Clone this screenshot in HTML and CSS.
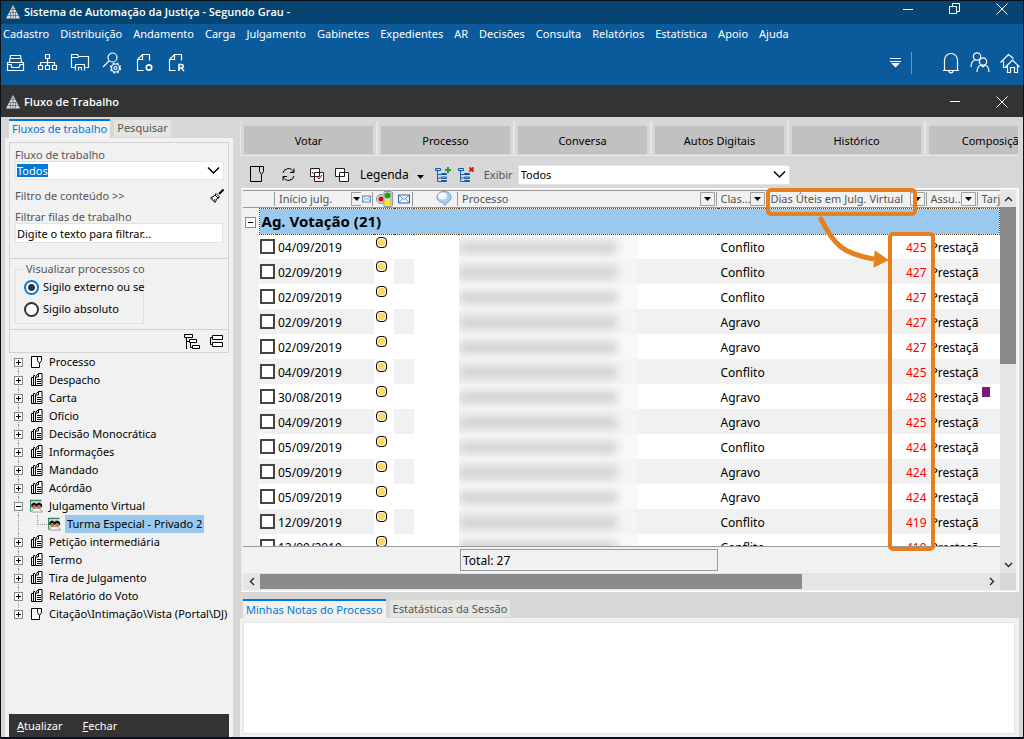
FILE: index.html
```html
<!DOCTYPE html>
<html lang="pt-BR">
<head>
<meta charset="utf-8">
<title>Sistema de Automação da Justiça - Segundo Grau</title>
<link rel="stylesheet" href="styles.css">
</head>
<body>
<svg class="defs" aria-hidden="true">
  <symbol id="logo" viewBox="0 0 14 14"><path d="M7 0L14 13.500H0z" fill="#d9dcdf"/><path d="M5 4.500h4M3.500 7.500h7M2 10.500h10M7 2v11M4.500 7v6M9.500 7v6" stroke="#56606a" stroke-width=".7" fill="none"/></symbol>
  <symbol id="docs" viewBox="0 0 13 14"><path d="M3 4.500H1.500v8H4M5 2.500H3.500v10H5.500" fill="none" stroke="#000"/><path d="M5.500 3.500l3-3h3.500v12H5.500z" fill="#fff" stroke="#000"/><path d="M5.500 4h3V.5M7 6.500h4M7 8.500h4M7 10.500h4" fill="none" stroke="#000"/></symbol>
  <symbol id="folder" viewBox="0 0 13 14"><path d="M1.500 1.500h10v4l-2 3v4h-8z" fill="#f8f8f8" stroke="#000"/><path d="M7.500 1.500v4l2 3" fill="none" stroke="#000"/></symbol>
  <symbol id="people" viewBox="0 0 14 14"><path d="M.5 13V1h12" fill="none" stroke="#2e8b57" stroke-width="1.500"/><path d="M1.500 2h11v6h-11z" fill="#d0d0d0"/><path d="M1.500 13.500l2.500-4h6l3.500 4z" fill="#f4f4f4" stroke="#777" stroke-width=".7"/><circle cx="4.500" cy="7.500" r="2.500" fill="#c9714a"/><circle cx="10" cy="7.500" r="2.500" fill="#c9714a"/><path d="M1.500 8V5l2-1.500h2L7 5l1.500-1.500h2L13 5v3h-1l-1-2H9L7 8 5.500 6h-2L2.500 8z" fill="#101010"/></symbol>
  <symbol id="mail" viewBox="0 0 12 10"><path d="M.5 1h11v8H.5z" fill="#f2f8ff" stroke="#2e5ea3"/><path d="M1 1.500l5 4 5-4M1 8.500L4.500 4.500M11 8.500L7.500 4.500" fill="none" stroke="#5f93cf"/></symbol>
  <symbol id="close" viewBox="0 0 12 12"><path d="M.5.5l11 11M11.500.5l-11 11" fill="none" stroke="#fff"/></symbol>
  <symbol id="chevron" viewBox="0 0 13 9"><path d="M1 1.500l5.500 5.500L12 1.500" fill="none" stroke="#000" stroke-width="1.500"/></symbol>
  <symbol id="drop" viewBox="0 0 15 14"><path d="M.5.5h14v13H.5z" fill="#f1f1f1" stroke="#a0a0a0"/><path d="M4 5h7L7.500 9z" fill="#000"/></symbol>
  <symbol id="bluetree" viewBox="0 0 17 16"><path d="M2.500 3v11.500h4M2.500 7.500h4M2.500 11h4" fill="none" stroke="#1b62b5"/><path d="M.5 1.500h5v2h-5zM6.500 6.500h5v1h-5zM6.500 10h5v1.500h-5zM6.500 13.500h5v1h-5z" fill="#bcdcff" stroke="#1457a8"/></symbol>
  <symbol id="page" viewBox="0 0 18 20"><path d="M7.500 17.500h-6V6.500l5-5h7v6M6.500 1.500v5h-5" fill="none" stroke="#fff" stroke-width="1.200"/></symbol>
</svg>
<div class="app">
  <header class="titlebar">
    <svg class="logo"><use href="#logo"/></svg>
    <h1>Sistema de Automação da Justiça - Segundo Grau -</h1>
    <div class="window-controls">
      <button aria-label="Minimizar"><svg width="10" height="11"><path d="M0 5.500h10" stroke="#fff"/></svg></button>
      <button aria-label="Restaurar"><svg width="11" height="12"><path d="M.5 3.500h7v7h-7zM3.500 3V.5h7v8H8" fill="none" stroke="#fff"/></svg></button>
      <button aria-label="Fechar janela"><svg width="12" height="12"><use href="#close"/></svg></button>
    </div>
  </header>
  <nav class="menu">
    <a href="#">Cadastro</a><a href="#">Distribuição</a><a href="#">Andamento</a><a href="#">Carga</a><a href="#">Julgamento</a><a href="#">Gabinetes</a><a href="#">Expedientes</a><a href="#">AR</a><a href="#">Decisões</a><a href="#">Consulta</a><a href="#">Relatórios</a><a href="#">Estatística</a><a href="#">Apoio</a><a href="#">Ajuda</a>
  </nav>
  <div class="ribbon">
    <button aria-label="Arquivo"><svg width="19" height="19" fill="none" stroke="#fff" stroke-width="1.200"><path d="M1.500 9.500h16v8h-16zM3.500 9L4.500 2.500h10L15.500 9M5 5.500h9M1.500 11.500h3.500l1 3h7l1-3h3.500"/></svg></button>
    <button aria-label="Organograma"><svg width="21" height="19" fill="none" stroke="#fff" stroke-width="1.200"><path d="M8.500 1.500h4v4h-4zM1.500 12.500h4v4h-4zM8.500 12.500h4v4h-4zM15.500 12.500h4v4h-4zM10.500 5.500v7M3.500 12V9.500h14V12"/></svg></button>
    <button aria-label="Pasta"><svg width="20" height="19" fill="none" stroke="#fff" stroke-width="1.200"><path d="M5.500 14.500h-4v-13h6l1 2h10v11h-3M1.500 4.500h7M5.500 17.500v-6h9v6M8.500 17.500v-3h3v3"/></svg></button>
    <button aria-label="Pesquisa configurada"><svg width="20" height="22" fill="none" stroke="#fff" stroke-width="1.200"><circle cx="10.500" cy="5.500" r="4.500"/><path d="M7 9l-6 6"/><circle cx="13.500" cy="16" r="1.500"/><circle cx="13.500" cy="16" r="4"/><circle cx="13.500" cy="16" r="5" stroke-dasharray="2 2"/></svg></button>
    <button aria-label="Documento O"><svg width="18" height="20"><use href="#page"/><circle cx="13" cy="14.500" r="2.700" fill="none" stroke="#fff" stroke-width="1.700"/></svg></button>
    <button aria-label="Documento R"><svg width="18" height="20"><use href="#page"/><path d="M11 18v-6.500h2.500a1.700 1.700 0 0 1 0 3.500H11M13.500 15l2.500 3" fill="none" stroke="#fff" stroke-width="1.600"/></svg></button>
    <div class="ribbon-end">
      <button aria-label="Opções"><svg width="11" height="10"><path d="M0 .5h11M0 3.500h11" stroke="#fff"/><path d="M1 5h9L5.500 9.500z" fill="#fff"/></svg></button>
      <span class="divider"></span>
      <button aria-label="Notificações"><svg width="18" height="22" fill="none" stroke="#fff" stroke-width="1.200"><path d="M1 18.500h16M2.500 18V8a6.500 6.500 0 0 1 13 0v10M7 19c0 2.500 4 2.500 4 0"/></svg></button>
      <button aria-label="Usuários"><svg width="20" height="21" fill="none" stroke="#fff" stroke-width="1.200"><circle cx="7" cy="4.500" r="3.700"/><circle cx="13" cy="9.500" r="3.700"/><path d="M1 15c0-4 1-6 4-7M9 8c1 0 1 1 1 1M7 20c0-4 1-6 4-7M15 13c3 1 4 3 4 7M11 13l2 2 2-2"/></svg></button>
      <button aria-label="Início"><svg width="20" height="20" fill="none" stroke="#fff" stroke-width="1.200"><path d="M.5 9.500l8-8 5 4M3.500 8v6.500h3M5.500 14l7-7 7 7M7.500 12.500v7h3v-5h4v5h3v-7"/></svg></button>
    </div>
  </div>
  <header class="subtitle">
    <svg class="logo"><use href="#logo"/></svg>
    <h2>Fluxo de Trabalho</h2>
    <div class="window-controls">
      <button aria-label="Minimizar fluxo"><svg width="10" height="11"><path d="M0 5.500h10" stroke="#fff"/></svg></button>
      <button aria-label="Fechar fluxo"><svg width="12" height="12"><use href="#close"/></svg></button>
    </div>
  </header>
  <div class="workspace">
    <aside class="side">
      <div class="tabs side-tabs"><button class="tab active">Fluxos de trabalho</button><button class="tab">Pesquisar</button></div>
      <div class="side-panel">
        <section class="box filters">
          <label for="fluxo">Fluxo de trabalho</label>
          <div class="combo"><select id="fluxo"><option>Todos</option></select><svg width="13" height="9"><use href="#chevron"/></svg></div>
          <div class="content-filter"><a href="#">Filtro de conteúdo &gt;&gt;</a>
            <button aria-label="Limpar filtro"><svg width="14" height="14"><path d="M13.500.5L9 5" stroke="#000" stroke-width="2"/><path d="M6 4.500l3.500 3.500-2 1-2.500 4.500-4.500-4.500L5 6.500zM5 6l3.500 3.500M2 9.500l1 .5M4 12l1-2" fill="#fff" stroke="#000"/></svg></button></div>
          <label for="filtrar">Filtrar filas de trabalho</label>
          <input id="filtrar" class="text" type="text" placeholder="Digite o texto para filtrar...">
        </section>
        <section class="box secrecy">
          <fieldset>
            <legend>Visualizar processos co</legend>
            <label><input type="radio" name="sigilo" checked>Sigilo externo ou se</label>
            <label><input type="radio" name="sigilo">Sigilo absoluto</label>
          </fieldset>
        </section>
        <div class="box tree-tools">
          <button aria-label="Expandir tudo"><svg width="17" height="17" fill="#fff" stroke="#000"><path d="M.5 1.500h8v3h-8zM5.500 6.500h7v3h-7zM8.500 12.500h7v3h-7z"/><path d="M2.500 5v11M2.500 8.500h3M6.500 10v4.500h2" fill="none"/></svg></button>
          <button aria-label="Recolher tudo"><svg width="13" height="12" fill="#fff" stroke="#000"><path d="M2.500.5h10v4h-10zM2.500 7.500h10v4h-10z"/><path d="M2 2.500H.5v7H2" fill="none"/></svg></button>
        </div>
        <ul class="tree">
          <li><button class="exp" aria-label="Expandir"></button><svg><use href="#folder"/></svg><span>Processo</span></li>
          <li><button class="exp" aria-label="Expandir"></button><svg><use href="#docs"/></svg><span>Despacho</span></li>
          <li><button class="exp" aria-label="Expandir"></button><svg><use href="#docs"/></svg><span>Carta</span></li>
          <li><button class="exp" aria-label="Expandir"></button><svg><use href="#docs"/></svg><span>Ofício</span></li>
          <li><button class="exp" aria-label="Expandir"></button><svg><use href="#docs"/></svg><span>Decisão Monocrática</span></li>
          <li><button class="exp" aria-label="Expandir"></button><svg><use href="#docs"/></svg><span>Informações</span></li>
          <li><button class="exp" aria-label="Expandir"></button><svg><use href="#docs"/></svg><span>Mandado</span></li>
          <li><button class="exp" aria-label="Expandir"></button><svg><use href="#docs"/></svg><span>Acórdão</span></li>
          <li><button class="exp open" aria-label="Recolher"></button><svg><use href="#people"/></svg><span>Julgamento Virtual</span></li>
          <li class="child"><svg><use href="#people"/></svg><span class="selected">Turma Especial - Privado 2</span></li>
          <li><button class="exp" aria-label="Expandir"></button><svg><use href="#docs"/></svg><span>Petição intermediária</span></li>
          <li><button class="exp" aria-label="Expandir"></button><svg><use href="#docs"/></svg><span>Termo</span></li>
          <li><button class="exp" aria-label="Expandir"></button><svg><use href="#docs"/></svg><span>Tira de Julgamento</span></li>
          <li><button class="exp" aria-label="Expandir"></button><svg><use href="#docs"/></svg><span>Relatório do Voto</span></li>
          <li><button class="exp" aria-label="Expandir"></button><svg><use href="#folder"/></svg><span>Citação\Intimação\Vista (Portal\DJ)</span></li>
        </ul>
        <footer class="side-actions"><button><u>A</u>tualizar</button><button><u>F</u>echar</button></footer>
      </div>
    </aside>
    <main class="main">
      <div class="actions">
        <div><button>Votar</button></div><div><button>Processo</button></div><div><button>Conversa</button></div><div><button>Autos Digitais</button></div><div><button>Histórico</button></div><div><button>Composição</button></div>
      </div>
      <div class="toolbar">
        <button aria-label="Pasta do processo"><svg width="15" height="17" fill="none" stroke="#000"><path d="M11.500 15.500H.5V.5h13v5l-2 3v7M9.500.5v5l2 3"/></svg></button>
        <button class="refresh" aria-label="Atualizar lista"><svg width="13" height="13" fill="none" stroke="#000"><path d="M1 5a5.500 5.500 0 0 1 10.500-1M12 .5V4.500H8M12 8a5.500 5.500 0 0 1-10.500 1M1 12.500V8.500h4"/></svg></button>
        <button aria-label="Marcar todos"><svg width="15" height="14" fill="#fff" stroke="#222"><path d="M.5.5h9v8h-9zM4.500 4.500h9v9h-9z"/><path d="M2 4l1.500 2M7 8.500l2 2.500 3-4" fill="none" stroke="#a00"/></svg></button>
        <button aria-label="Desmarcar todos"><svg width="15" height="14" fill="#fff" stroke="#222"><path d="M.5.5h9v8h-9zM4.500 4.500h9v9h-9z"/></svg></button>
        <button class="legend">Legenda <svg width="7" height="4"><path d="M0 0h7L3.500 4z"/></svg></button>
        <button class="expand" aria-label="Expandir grupos"><svg width="17" height="16"><use href="#bluetree"/><path d="M13 0v6M10 3h6" stroke="#2b9348" stroke-width="2"/></svg></button>
        <button aria-label="Recolher grupos"><svg width="17" height="16"><use href="#bluetree"/><path d="M11.500.5l4 4M15.500.5l-4 4" stroke="#d81e05" stroke-width="2"/></svg></button>
        <label for="exibir">Exibir</label>
        <div class="combo wide"><select id="exibir"><option>Todos</option></select><svg width="13" height="9"><use href="#chevron"/></svg></div>
      </div>
      <section class="grid">
        <div class="grid-row">
          <div class="grid-body">
            <div class="table-clip">
              <table>
                <colgroup><col class="c-gut"><col class="c-chk"><col class="c-date"><col class="c-ic"><col class="c-ic"><col class="c-talk"><col><col class="c-class"><col class="c-days"><col class="c-subj"><col class="c-tag"></colgroup>
                <thead><tr>
                  <th></th><th class="sep"></th>
                  <th class="sep"><div class="h">Início julg.<span class="h-icons"><svg width="10" height="14"><path d="M.5 14V.5H10M10 13.500H0" fill="none" stroke="#a0a0a0"/><path d="M2 5h7L6 9z"/></svg><svg width="9" height="10"><use href="#mail"/></svg></span></div></th>
                  <th class="sep"><svg width="16" height="16"><circle cx="5" cy="8" r="4.500" fill="#ddd" stroke="#888"/><circle cx="5" cy="8" r="2.500" fill="#d00a0a"/><path d="M8 .5h7v15H8z" fill="#ddd" stroke="#999"/><circle cx="11.500" cy="4.500" r="3" fill="#12a812"/><circle cx="11.500" cy="11.500" r="3" fill="#f8ed10"/></svg></th>
                  <th class="sep"><svg width="12" height="10"><use href="#mail"/></svg></th>
                  <th class="sep talk"><svg width="16" height="15"><path d="M8 .5c4.500 0 7 2.500 7 5.500s-2 5-4 5.500l-2 3-2-3C3 11 1 9 1 6S3.500.5 8 .5z" fill="#a9cdee" stroke="#7d9dbd"/><ellipse cx="6.500" cy="5" rx="4.500" ry="3.500" fill="#f4faff"/></svg></th>
                  <th class="sep"><div class="h">Processo<svg width="15" height="14"><use href="#drop"/></svg></div></th>
                  <th><div class="h tight">Clas...<svg width="15" height="14"><use href="#drop"/></svg></div></th>
                  <th class="sep"><div class="h">Dias Úteis em Julg. Virtual<svg width="15" height="14"><use href="#drop"/></svg></div></th>
                  <th class="sep"><div class="h tight">Assu...<svg width="15" height="14"><use href="#drop"/></svg></div></th>
                  <th><div class="h tight">Tarj</div></th>
                </tr></thead>
                <tbody>
                  <tr class="group"><td><button class="exp open" aria-label="Recolher grupo"></button></td><td colspan="10">Ag. Votação (21)</td></tr>
                  <tr><td></td><td><input type="checkbox" aria-label="Selecionar"></td><td>04/09/2019</td><td><i></i></td><td></td><td></td><td><b></b></td><td>Conflito</td><td>425</td><td>Prestação</td><td></td></tr>
                  <tr><td></td><td><input type="checkbox" aria-label="Selecionar"></td><td>02/09/2019</td><td><i></i></td><td></td><td></td><td><b></b></td><td>Conflito</td><td>427</td><td>Prestação</td><td></td></tr>
                  <tr><td></td><td><input type="checkbox" aria-label="Selecionar"></td><td>02/09/2019</td><td><i></i></td><td></td><td></td><td><b></b></td><td>Conflito</td><td>427</td><td>Prestação</td><td></td></tr>
                  <tr><td></td><td><input type="checkbox" aria-label="Selecionar"></td><td>02/09/2019</td><td><i></i></td><td></td><td></td><td><b></b></td><td>Agravo</td><td>427</td><td>Prestação</td><td></td></tr>
                  <tr><td></td><td><input type="checkbox" aria-label="Selecionar"></td><td>02/09/2019</td><td><i></i></td><td></td><td></td><td><b></b></td><td>Agravo</td><td>427</td><td>Prestação</td><td></td></tr>
                  <tr><td></td><td><input type="checkbox" aria-label="Selecionar"></td><td>04/09/2019</td><td><i></i></td><td></td><td></td><td><b></b></td><td>Conflito</td><td>425</td><td>Prestação</td><td></td></tr>
                  <tr><td></td><td><input type="checkbox" aria-label="Selecionar"></td><td>30/08/2019</td><td><i></i></td><td></td><td></td><td><b></b></td><td>Agravo</td><td>428</td><td>Prestação</td><td><span class="tag"></span></td></tr>
                  <tr><td></td><td><input type="checkbox" aria-label="Selecionar"></td><td>04/09/2019</td><td><i></i></td><td></td><td></td><td><b></b></td><td>Agravo</td><td>425</td><td>Prestação</td><td></td></tr>
                  <tr><td></td><td><input type="checkbox" aria-label="Selecionar"></td><td>05/09/2019</td><td><i></i></td><td></td><td></td><td><b></b></td><td>Conflito</td><td>424</td><td>Prestação</td><td></td></tr>
                  <tr><td></td><td><input type="checkbox" aria-label="Selecionar"></td><td>05/09/2019</td><td><i></i></td><td></td><td></td><td><b></b></td><td>Agravo</td><td>424</td><td>Prestação</td><td></td></tr>
                  <tr><td></td><td><input type="checkbox" aria-label="Selecionar"></td><td>05/09/2019</td><td><i></i></td><td></td><td></td><td><b></b></td><td>Agravo</td><td>424</td><td>Prestação</td><td></td></tr>
                  <tr><td></td><td><input type="checkbox" aria-label="Selecionar"></td><td>12/09/2019</td><td><i></i></td><td></td><td></td><td><b></b></td><td>Conflito</td><td>419</td><td>Prestação</td><td></td></tr>
                  <tr><td></td><td><input type="checkbox" aria-label="Selecionar"></td><td>12/09/2019</td><td><i></i></td><td></td><td></td><td><b></b></td><td>Conflito</td><td>419</td><td>Prestação</td><td></td></tr>
                </tbody>
              </table>
            </div>
            <div class="summary"><output>Total: 27</output></div>
            <svg class="callout" width="236" height="368" viewBox="0 0 236 368" fill="none" stroke="#e6801c">
              <rect x="4" y="4" width="147" height="24" rx="3" stroke-width="4"/>
              <rect x="126" y="48" width="43" height="315" rx="3" stroke-width="4"/>
              <path d="M56 31C70 60 80 68 110 73" stroke-width="5"/>
              <path d="M111 65l13 9-14 7z" fill="#e6801c" stroke-width="1"/>
            </svg>
          </div>
          <div class="vscroll"><button aria-label="Rolar para cima"><svg width="9" height="6"><path d="M1 5l3.500-3.500L8 5" fill="none" stroke="#222" stroke-width="1.300"/></svg></button><span class="vthumb"></span><button aria-label="Rolar para baixo"><svg width="9" height="6"><path d="M1 1l3.500 3.500L8 1" fill="none" stroke="#222" stroke-width="1.300"/></svg></button></div>
        </div>
        <div class="hscroll"><button aria-label="Rolar para a esquerda"><svg width="6" height="9"><path d="M5 1L1.500 4.500 5 8" fill="none" stroke="#222" stroke-width="1.300"/></svg></button><div class="htrack"><span></span></div><button aria-label="Rolar para a direita"><svg width="6" height="9"><path d="M1 1l3.500 3.500L1 8" fill="none" stroke="#222" stroke-width="1.300"/></svg></button><span class="corner"></span></div>
      </section>
      <section class="notes">
        <div class="tabs"><button class="tab active">Minhas Notas do Processo</button><button class="tab">Estatásticas da Sessão</button></div>
        <div class="notes-panel"><textarea aria-label="Minhas Notas do Processo"></textarea></div>
      </section>
    </main>
  </div>
</div>
</body>
</html>
```
FILE: styles.css
```css
* { box-sizing: border-box; }
body, h1, h2, ul, fieldset { margin: 0; padding: 0; }
body { font: 11px/16px "Noto Sans", "Open Sans", sans-serif; color: #000; background: #d7d7d7; }
button, input, select, textarea { font: inherit; color: inherit; margin: 0; padding: 0; border: 0; background: none; border-radius: 0; }
button { display: flex; align-items: center; justify-content: center; flex: none; }
svg { flex: none; display: block; }
a { color: inherit; text-decoration: none; }
.defs { position: absolute; width: 0; height: 0; }
.app { display: flex; flex-direction: column; height: 100vh; border: 1px solid #0b1118; border-bottom-width: 2px; overflow: hidden; }

.titlebar, .subtitle { display: flex; align-items: center; color: #fff; padding: 0 15px 0 5px; gap: 4px; flex: none; }
.titlebar { height: 23px; background: #064472; }
.subtitle { height: 32px; background: #333; padding-top: 1px; }
.titlebar .logo, .titlebar h1 { margin-bottom: 2px; }
.logo { width: 14px; height: 14px; }
h1, h2 { font: 600 11px/16px "Open Sans", sans-serif; }
.window-controls { display: flex; gap: 36px; margin-left: auto; align-items: center; }
.titlebar .window-controls { align-self: flex-start; padding-top: 2px; }

.menu { display: flex; gap: 11px; height: 20px; padding: 2px; background: #0b5a9b; color: #fff; flex: none; }
.ribbon { display: flex; align-items: center; gap: 12px; height: 41px; padding: 0 3px 4px 5px; background: #0b5a9b; flex: none; }
.ribbon > button:nth-child(n+5) { margin-left: 2px; }
.ribbon-end { display: flex; align-items: center; gap: 10px; margin-left: auto; }
.divider { width: 1px; height: 22px; background: #8d8d8d; margin-right: 20px; }

.workspace { display: flex; flex: 1; min-height: 0; background: #d7d7d7; }
.side { display: flex; flex-direction: column; width: 228px; margin-left: 4px; flex: none; padding-top: 2px; }
.tabs { display: flex; gap: 4px; height: 19px; padding: 0 4px; flex: none; align-items: flex-end; }
.tab { height: 17px; padding: 0 3px; background: #e4e4e1; color: #555; margin-bottom: 1px; }
.tab.active { height: 19px; margin: 0; background: #f1f1f1; color: #0078d7; border-top: 2px solid #0078d7; }
.side-tabs .tab { padding-bottom: 2px; }
.side-panel { display: flex; flex-direction: column; flex: 1; min-height: 0; background: #f1f1f1; padding: 4px 4px 0; }
.box { border: 1px solid #d2d2d2; flex: none; color: #555; }
.box + .box { border-top: 0; }
.filters { height: 117px; padding: 4px 4px 0 5px; }
.filters label { display: block; height: 16px; }
.combo { display: flex; align-items: center; justify-content: space-between; height: 20px; background: #fff; border: 1px solid #e3e3e3; padding: 0 3px 0 2px; color: #000; }
.combo select { appearance: none; }
.filters .combo { height: 19px; margin-top: -2px; padding-left: 1px; }
.filters .combo select { background: #0078d7; color: #fff; height: 13px; line-height: 13px; }
.content-filter { display: flex; align-items: center; justify-content: space-between; height: 28px; margin-top: 2px; }
.filters .content-filter + label { margin-top: -1px; }
.text { display: block; width: 208px; height: 20px; padding: 0 1px; background: #fff; border: 1px solid #e3e3e3; }
.filters .text { margin-top: -2px; }
.text::placeholder { color: #000; opacity: 1; }
.secrecy { height: 71px; padding: 2px 5px; }
fieldset { width: 129px; height: 63px; border: 1px solid #e1e1e1; padding-left: 8px; min-width: 0; }
legend { margin-left: 2px; padding: 0; white-space: nowrap; }
fieldset label { display: flex; align-items: center; gap: 4px; height: 22px; white-space: nowrap; color: #000; }
fieldset label:first-of-type { margin-top: -1px; }
input[type=radio] { appearance: none; flex: none; width: 15px; height: 15px; border: 2px solid #333; border-radius: 50%; background: #fff; }
input[type=radio]:checked { border-color: #0078d7; background: radial-gradient(circle, #333 0 3px, #fff 4px); }
.tree-tools { display: flex; align-items: center; justify-content: flex-end; gap: 9px; height: 23px; padding-right: 5px; }

.tree { flex: 1; list-style: none; overflow: hidden; }
.tree li { position: relative; display: flex; align-items: center; height: 18px; padding-left: 5px; white-space: nowrap; }
.tree li::before { content: ""; position: absolute; left: 9px; top: 0; bottom: 0; border-left: 1px dotted #999; }
.tree li:first-child::before { top: 9px; }
.tree li:last-child::before { bottom: 9px; }
.tree li svg { width: 13px; height: 14px; margin: 0 6px 0 7px; }
.tree .child { padding-left: 32px; }
.tree .child::after { content: ""; position: absolute; left: 28px; top: 0; width: 9px; height: 9px; border: dotted #999; border-width: 0 0 1px 1px; }
.tree .child svg { margin-right: 4px; }
.selected { background: #99c9ef; padding: 1px 2px; }
.exp { position: relative; width: 9px; height: 9px; border: 1px solid #888; background: linear-gradient(#000, #000) center / 5px 1px no-repeat, linear-gradient(#000, #000) center / 1px 5px no-repeat, #fff; }
.exp.open { background: linear-gradient(#000, #000) center / 5px 1px no-repeat, #fff; }
.side-actions { display: flex; align-items: center; gap: 20px; height: 23px; padding: 0 8px; background: #333; color: #fff; flex: none; }

.main { display: flex; flex-direction: column; flex: 1; min-width: 0; margin: 0 4px 0 7px; }
.actions { display: flex; height: 40px; padding-top: 4px; margin-right: 1px; overflow: hidden; flex: none; }
.actions div { flex: none; width: 137px; height: 35px; padding: 5px 3px 1px; border: solid #e6e6e6; border-width: 0 1px 1px; }
.actions button { width: 100%; height: 28px; padding-top: 2px; background: #c1c1c1; }
.toolbar { display: flex; align-items: center; height: 31px; padding: 4px 0 0 10px; gap: 10px; flex: none; }
.toolbar > label { color: #555; margin: 0 -5px 0 -1px; }
.toolbar .refresh { margin: 0 5px 0 7px; }
.legend { font-size: 12px; gap: 8px; }
.legend svg { margin-top: 4px; }
.toolbar .expand { margin: 0 -4px 0 1px; }
.wide { width: 272px; }
.wide select { flex: 1; }

.grid { display: flex; flex-direction: column; flex: 1; min-height: 0; margin: 0 0 0 1px; padding: 1px 2px 1px 1px; border: 1px solid #fff; border-left-color: #e6e6e6; background: #f1f1f1; }
.grid-row { display: flex; flex: 1; min-height: 0; }
.grid-body { position: relative; display: flex; flex-direction: column; flex: 1; min-width: 0; }
.table-clip { flex: 1; min-height: 0; overflow: hidden; background: #fff; border-bottom: 1px solid #999; }
table { table-layout: fixed; border-collapse: collapse; width: 100%; font-size: 12px; }
.c-gut { width: 16px; } .c-chk { width: 17px; } .c-date { width: 98px; } .c-ic { width: 20px; } .c-talk { width: 45px; }
.c-class { width: 50px; } .c-days { width: 160px; } .c-subj { width: 51px; } .c-tag { width: 21px; }
th { height: 18px; padding: 0; background: linear-gradient(#999, #999) top / 100% 1px no-repeat, linear-gradient(#999, #999) bottom / 100% 1px no-repeat, #f1f1f1; font: 11px/16px "Noto Sans", sans-serif; color: #555; }
th > svg { margin: auto; }
th.sep { background: linear-gradient(#999, #999) top / 100% 1px no-repeat, linear-gradient(#999, #999) bottom / 100% 1px no-repeat, linear-gradient(#999, #999) right 1px center / 1px 14px no-repeat, #f1f1f1; }
th.talk > svg { margin-right: 7px; }
.h { display: flex; align-items: center; justify-content: space-between; padding: 0 3px; white-space: nowrap; }
.tight svg { margin-left: -4px; }
.h-icons { display: flex; align-items: center; gap: 1px; }
td { height: 25px; padding: 2px 0 0; overflow: hidden; white-space: nowrap; line-height: 18px; }
td:first-child { background: #f1f1f1; }
td:nth-child(2) { padding-top: 0; }
td:nth-child(3) { padding-left: 2px; }
td:nth-child(4) { padding-top: 0; vertical-align: top; }
td:nth-child(8) { padding-left: 3px; }
td:nth-child(9) { text-align: right; padding-right: 1px; color: #f00; }
td:nth-child(10) { padding-left: 3px; }
td:nth-child(11) { padding-top: 0; vertical-align: top; }
tbody tr:nth-child(odd) td:not(:nth-child(4)):not(:nth-child(6)) { background: #f1f1f1; }
tbody .group td:nth-child(2) { height: 26px; background: #99c9ef !important; border: 1px dotted #643c14; font-size: 15px; font-weight: 700; padding-left: 2px; }
.group .exp { width: 11px; height: 11px; margin-left: 2px; }
input[type=checkbox] { appearance: none; display: block; width: 15px; height: 15px; margin-left: 1px; border: 2px solid #444; background: #fff; }
td i { display: block; width: 11px; height: 11px; margin: 2px; border: 1px solid #000; border-radius: 4px; background: #ffd966; box-shadow: inset 0 0 0 1px #fff; }
td b { display: block; width: 158px; height: 13px; background: #d2d2d2; filter: blur(5px); }
tbody tr td:nth-child(7) { background: linear-gradient(90deg, #f8f8f8 0 179px, transparent 179px) !important; }
tbody tr:nth-child(odd) td:nth-child(7) { background: linear-gradient(90deg, #f4f4f4 0 179px, #f1f1f1 179px) !important; }
.tag { display: block; width: 8px; height: 10px; margin: 3px 0 0 3px; background: #741b7c; }
.summary { height: 26px; padding: 2px 0 2px 217px; flex: none; }
.summary output { display: block; width: 258px; height: 22px; padding: 2px; border: 1px solid #999; font-size: 12px; line-height: 18px; }
.callout { position: absolute; right: 0; top: -4px; }
.vscroll { display: flex; flex-direction: column; width: 16px; background: #e5e5e5; flex: none; }
.vscroll button { height: 17px; }
.vscroll .vthumb { flex: none; height: 157px; background: #8a8a8a; margin-bottom: auto; }
.hscroll { display: flex; height: 17px; background: #e5e5e5; flex: none; }
.hscroll button { width: 17px; }
.htrack { flex: 1; padding: 1px 0; }
.htrack span { display: block; width: 75%; height: 15px; background: #8a8a8a; }
.corner { width: 16px; background: #d7d7d7; }

.notes { display: flex; flex-direction: column; height: 145px; padding-top: 7px; flex: none; }
.notes .tabs { padding-left: 3px; }
.notes-panel { flex: 1; padding: 4px 4px 3px 3px; background: #f1f1f1; display: flex; }
textarea { flex: 1; background: #fff; border: 1px solid #e3e3e3; resize: none; }
```
